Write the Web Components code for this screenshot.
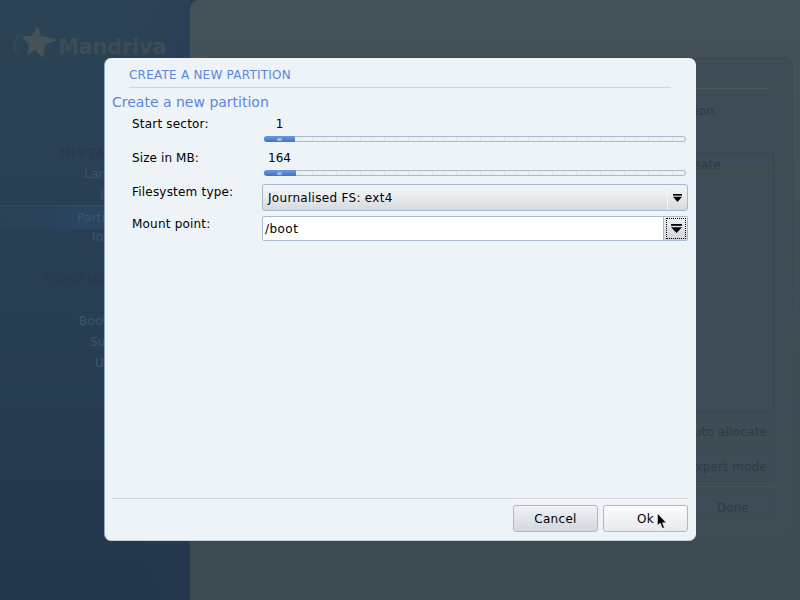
<!DOCTYPE html>
<html><head><meta charset="utf-8">
<style>html,body{margin:0;padding:0;width:800px;height:600px;overflow:hidden;font-family:"DejaVu Sans",sans-serif;}</style>
</head><body>
<installer-app>
  <installer-sidebar slot="side"></installer-sidebar>
  <partition-page slot="main"></partition-page>
  <partition-dialog slot="dialog"></partition-dialog>
</installer-app>
<script>
function def(name, html, init){
  customElements.define(name, class extends HTMLElement{
    constructor(){super();this.attachShadow({mode:'open'}).innerHTML=html;if(init)init(this.shadowRoot,this);}
  });
}
def('installer-app',`<style>
:host{display:flex;position:relative;width:800px;height:600px;overflow:hidden;background:#2b4056}
</style><slot name="side"></slot><slot name="main"></slot><slot name="dialog"></slot>
<svg style="position:absolute;left:657px;top:513px" width="11" height="16" viewBox="0 0 11 16"><path d="M0.5 0.5V12.5L3.3 10L5.2 15H7.4L5.5 9.7H9.3Z" fill="#000" stroke="#fff" stroke-width=".5"/></svg>`);

def('installer-sidebar',`<style>
:host{display:block;width:190px;height:600px;flex:none;background:linear-gradient(90deg,transparent 72%,rgba(40,55,90,.3) 100%),linear-gradient(#2c4356,#273d52 60%,#23374b);color:#41566a;font-size:12px;overflow:hidden}
.logo{display:flex;align-items:center;height:42px;margin:22px 0 0 10px;gap:1px}
.logo span{font:bold 21px "DejaVu Sans",sans-serif;letter-spacing:-.3px;color:#3d4c55;margin-top:8px}
nav{display:flex;flex-direction:column;margin-top:79px}
.h{font-weight:bold;color:#263a50;letter-spacing:1.2px;height:21px;line-height:21px;white-space:nowrap}
.i{height:21px;line-height:21px;white-space:nowrap;letter-spacing:.2px}
.a{background:linear-gradient(90deg,rgba(255,255,255,.01),#2a4560 40%);border-top:1px solid #31495f;box-sizing:border-box;height:24px;line-height:24px;margin-top:-1px;margin-bottom:-2px}
.gap{height:21px}
</style>
<div class="logo"><svg width="47" height="36" viewBox="0 0 47 36"><path d="M12 8C1 12-1 29 15 33 5 29 3 18 12 8Z" fill="#344957"/><path d="M28 1L31 11 45 14 50 15 44 16 35 20 33 33 25 25 17 30 19 20 12 11 22 11Z" fill="#465258"/></svg><span>Mandriva</span></div>
<nav>
<div class="h" style="padding-left:60px">INSTALLATION</div><div class="i" style="padding-left:84px">Language</div><div class="i" style="padding-left:100px">Live</div><div class="i a" style="padding-left:77px">Partitioning</div><div class="i" style="padding-left:92px">Install</div>
<div class="gap"></div>
<div class="h" style="padding-left:45px">CONFIGURATION</div><div class="gap"></div><div class="i" style="padding-left:79px">Bootloader</div><div class="i" style="padding-left:90px">Summary</div><div class="i" style="padding-left:95px">Users</div>
</nav>`);

def('partition-page',`<style>
:host{display:block;flex:1;height:600px;background:#2b3c58}
.back{height:600px;box-sizing:border-box;border-radius:9px 0 0 0;background:linear-gradient(#46525a,#3f4e56 40%,#3c4a52);padding:57px 7px 63px 10px;color:#2d3c46;font-size:12px;letter-spacing:.2px}
.card{height:100%;box-sizing:border-box;border:1px solid #3a4952;border-radius:10px;background:#3d4c55;padding:30px 17px 0 0;display:flex;flex-direction:column;align-items:flex-end}
.rule{height:1px;background:#4a5860;align-self:stretch;margin:0 6px 0 20px}
p{margin:15px 57px 34px 0;height:15px;line-height:15px}
.tbl{width:560px;height:259px;border:1px solid #37464e;box-sizing:border-box;margin:0 1px 5px 0}
.th{height:20px;line-height:22px;border-bottom:1px solid #3d4d46;text-align:right;padding-right:52px}
.b{height:26px;line-height:28px;box-sizing:border-box;border:1px solid #3a4952;border-bottom-color:#3b4a49;padding:0 7px 0 20px;text-align:right;white-space:nowrap}
.b+.b{margin-top:9px}
.rule2{height:1px;background:#46545c;align-self:stretch;margin:8px 0 8px 20px}
.done{width:84px;height:24px;line-height:24px;text-align:center;padding:0}
</style>
<div class="back"><div class="card">
<div class="rule"></div><p>Select the partition configuration.</p>
<div class="tbl"><div class="th">Create</div></div>
<div class="b">Auto allocate</div><div class="b">Expert mode</div>
<div class="rule2"></div><div class="b done">Done</div>
</div></div>`);

def('form-slider',`<style>
:host{display:block;height:6px;margin-right:2px;position:relative;border:1px solid #a9bacd;border-radius:3px;box-sizing:border-box;background:repeating-linear-gradient(90deg,#eef3f7 0 11px,#dce2e9 11px 12px)}
.fill{position:absolute;left:-1px;top:-1px;height:6px;border-radius:3px 1px 1px 3px;background:linear-gradient(#6a9bdc,#3c73c4)}
.k{position:absolute;top:1.5px;left:13px;width:5px;height:3px;border-radius:2px;background:#9dbce6}
</style><div class="fill"><div class="k"></div></div>`,(r,h)=>{
  queueMicrotask(()=>{r.querySelector('.fill').style.width=(h.getAttribute('fill')||31)+'px';});
});

def('combo-arrow',`<style>
:host{display:flex;align-items:center;justify-content:center}
svg{display:block;width:var(--w,9px);height:var(--h,8px)}
</style><svg viewBox="0 0 11 10" preserveAspectRatio="none"><rect x="0" y="0" width="11" height="2" fill="#000"/><path d="M0 3.5H11L5.5 10Z" fill="#000"/></svg>`);

def('form-select',`<style>
:host{display:flex;height:27px;box-sizing:border-box;border:1px solid #a9bacd;border-radius:3px;background:linear-gradient(#f3f6f9,#e9edf1 45%,#d4d9de);color:#000;font-size:12px;letter-spacing:.3px}
.t{flex:1;padding-left:5px;line-height:27px}
combo-arrow{width:19px;border-left:1px solid #f4f6f8}
</style><div class="t"><slot></slot></div><combo-arrow></combo-arrow>`);

def('form-entry',`<style>
:host{display:flex;height:25px;box-sizing:border-box;border:1px solid #a9bacd;border-radius:2px;background:#fff;color:#000;font-size:12px;letter-spacing:.45px;--w:11px;--h:9px}
.t{flex:1;padding-left:2px;line-height:25px}
.d{width:24px;box-sizing:border-box;border-left:1px solid #a9bacd;background:linear-gradient(#eef1f4,#cfd5da);padding:1px 1px 1px 2px}
combo-arrow{height:100%;box-sizing:border-box;border:1px dotted #000}
</style><div class="t"><slot></slot></div><div class="d"><combo-arrow></combo-arrow></div>`);

def('form-button',`<style>
:host{display:block;width:85px;height:27px;box-sizing:border-box;border:1px solid #a9bacd;border-radius:3px;background:linear-gradient(#f0f3f6,#d2d8de);color:#000;font-size:12px;letter-spacing:.3px;text-align:center;line-height:27px}
:host([hot]){background:linear-gradient(#fbfcfd,#e6ebf0)}
</style><slot></slot>`);

def('partition-dialog',`<style>
:host{position:absolute;left:104px;top:58px;width:592px;height:483px;box-sizing:border-box;background:#eef3f7;border-radius:7px;border-left:1px solid #93a7bf;border-bottom:1px solid #c6d0dc;display:flex;flex-direction:column;padding:0 8px 8px 7px;color:#000;font-size:12px}
.title{margin:0 17px;height:30px;border-bottom:1px solid #ced6df;box-sizing:border-box;color:#5a87dc;line-height:35px;white-space:nowrap;letter-spacing:.23px}
h2{margin:5px 0 1px 0;font:normal 14px/18px "DejaVu Sans",sans-serif;color:#5a87dc}
.form{display:grid;grid-template-columns:150px 1fr;padding-top:3px;letter-spacing:.2px}
.l{padding-left:20px;line-height:15px}
.val{display:block;width:31px;text-align:center;line-height:15px;letter-spacing:.1px}
.c{padding-left:2px;padding-bottom:8px}
.c form-slider{margin-top:4px}
.t2{padding-top:1px}
.sp{flex:1}
.sep{height:1px;background:#cfd6de}
.btns{display:flex;justify-content:flex-end;gap:5px;padding-top:6px}
</style>
<div class="title">CREATE A NEW PARTITION</div>
<h2>Create a new partition</h2>
<div class="form">
<div class="l" style="padding-top:2px">Start sector:</div><div class="c" style="padding-top:2px"><span class="val">1</span><form-slider fill="31"></form-slider></div>
<div class="l t2" style="letter-spacing:.1px">Size in MB:</div><div class="c t2"><span class="val">164</span><form-slider fill="32"></form-slider></div>
<div class="l t2">Filesystem type:</div><div style="padding-bottom:5px;letter-spacing:0"><form-select>Journalised FS: ext4</form-select></div>
<div class="l t2">Mount point:</div><div style="letter-spacing:0"><form-entry>/boot</form-entry></div>
</div>
<div class="sp"></div>
<div class="sep"></div>
<div class="btns"><form-button>Cancel</form-button><form-button hot>Ok</form-button></div>`);
</script>
</body></html>
